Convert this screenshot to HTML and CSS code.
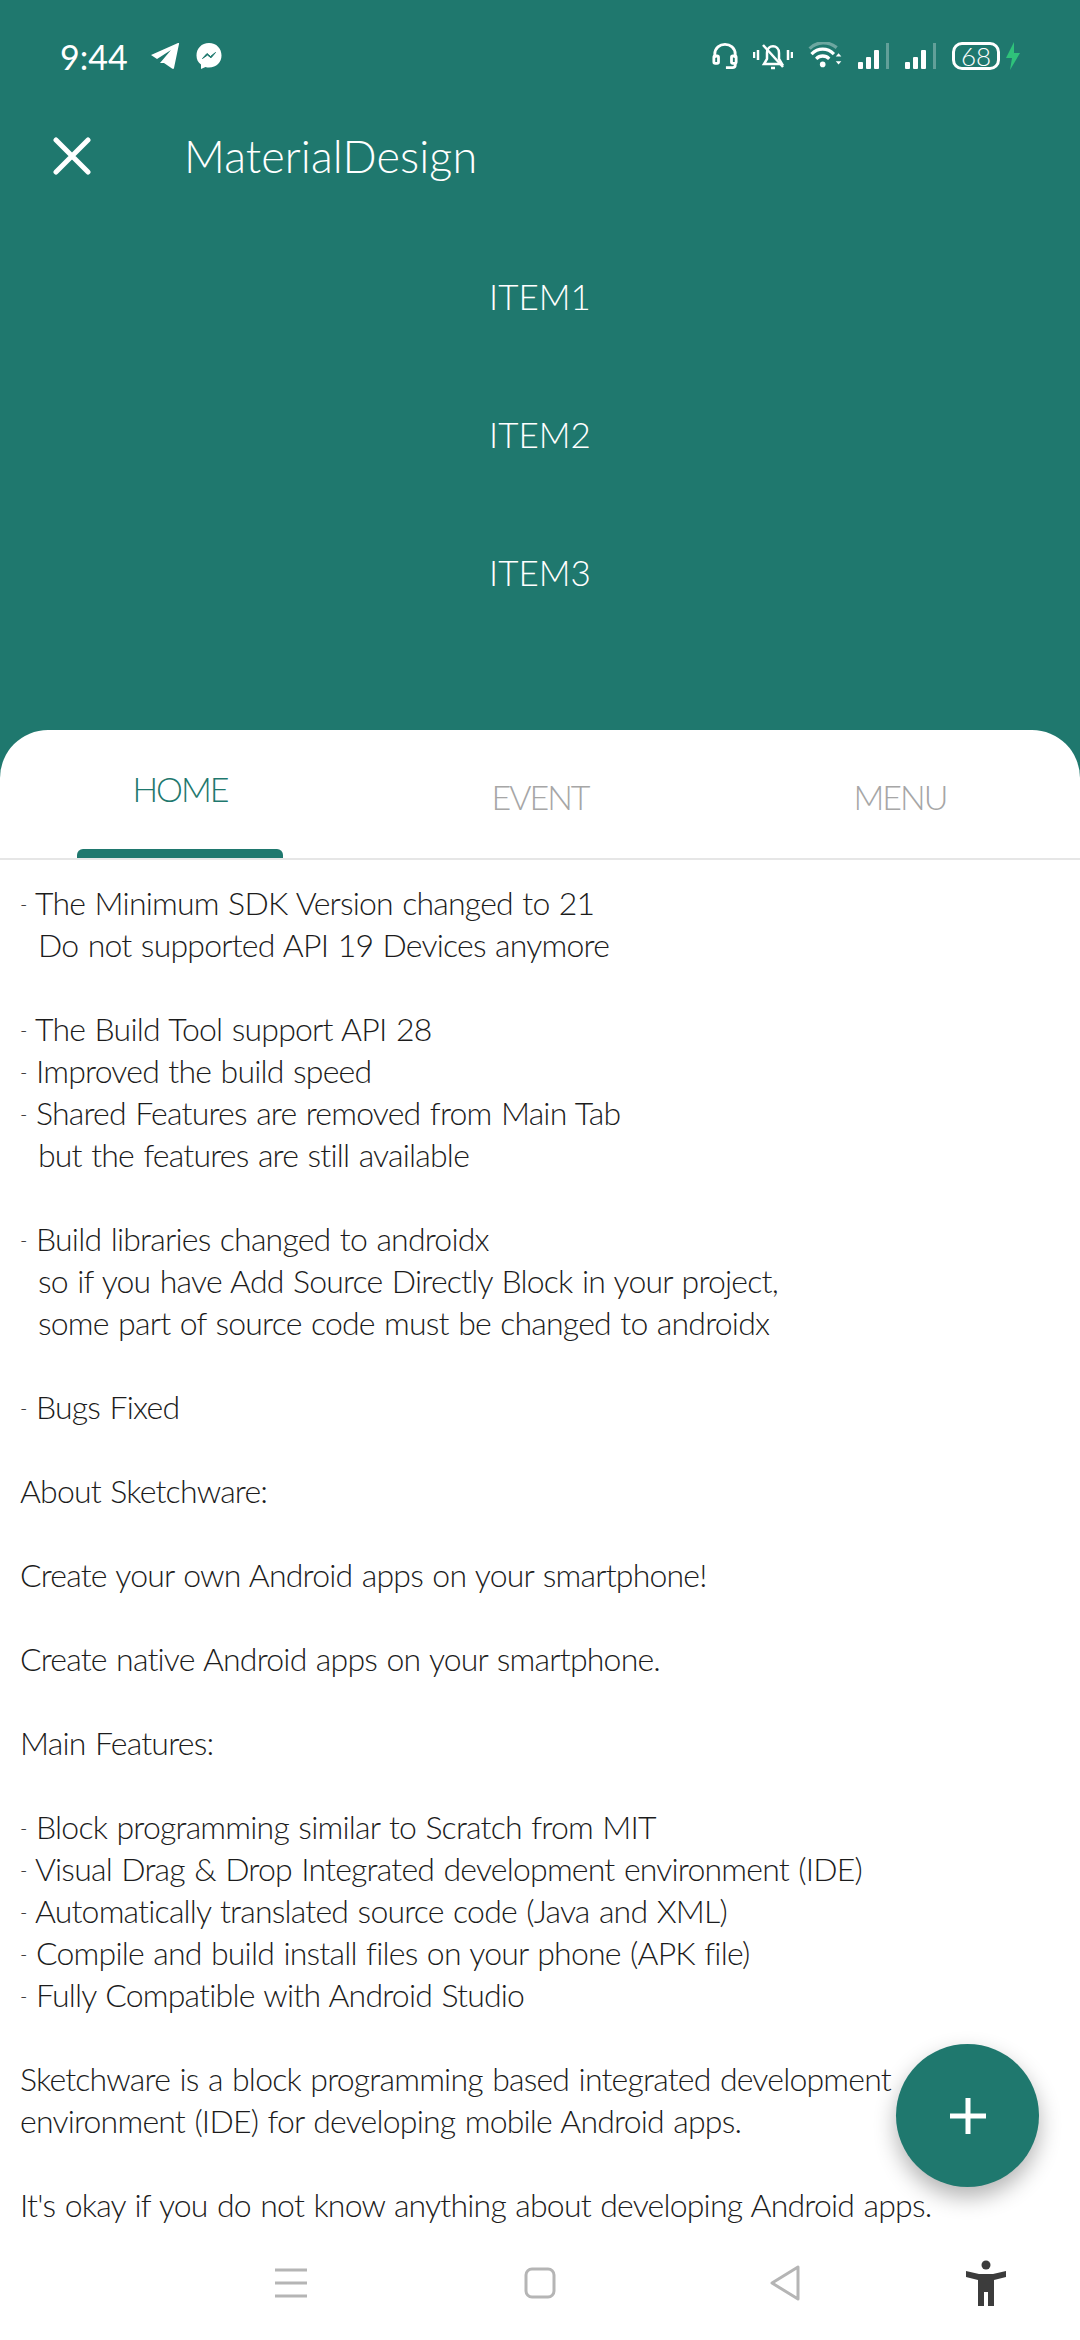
FILE: index.html
```html
<!DOCTYPE html>
<html>
    <head>
        <meta charset="utf-8">
        <title>MaterialDesign</title>
        <link rel="stylesheet" href="styles.css">
    </head>
    <body>
        <div class="screen">
            <div class="top">
                <div class="status">
                    <div class="status-left">
                        <span class="time">9:44</span>
                        <svg class="ic-telegram" width="30" height="28" viewBox="0 0 30 28"><path d="M1 13 L28 1 Q29.500 .5 29 2 L24 26 Q23.500 27.500 22 26.500 L14 21 L10 21 L21 8 L7 17 Z" fill="#fff"/></svg>
                        <svg class="ic-messenger" width="28" height="28" viewBox="0 0 28 28"><path d="M14 1 C6.500 1 1.500 6.500 1.500 13.500 C1.500 17.500 3 20.500 6 22.500 L6 27 L10.500 25 C11.500 25.500 12.800 25.600 14 25.600 C21.500 25.600 26.500 20 26.500 13.500 C26.500 6.500 21.500 1 14 1 Z" fill="#fff"/><path d="M7.500 16.500 L12 11.500 L15.500 14.500 L20.500 10.500 L16 15.800 L12.500 13 Z" fill="#1f786e" stroke="#1f786e"/></svg>
                    </div>
                    <div class="status-right">
                        <svg width="26" height="28" viewBox="0 0 28 30" fill="none" stroke="#fff" stroke-width="3"><path d="M3 17 V13 C3 -1 25 -1 25 13 V17"/><rect x="2" y="15" width="5" height="8" rx="1.500"/><rect x="21" y="15" width="5" height="8" rx="1.500"/><path d="M25 23 V25 Q25 27.500 22 27.500 H15"/></svg>
                        <svg width="40" height="30" viewBox="0 0 40 30" fill="none" stroke="#fff" stroke-width="2.500"><path d="M1 11 V17 M5 9 V19 M35 9 V19 M39 11 V17"/><path d="M11 23 H29 L26 18 V12 C26 3 14 3 14 12 V18 Z"/><path d="M10 4 L30 26"/><path d="M18 27 H22"/></svg>
                        <svg class="ic-wifi" width="35" height="28" viewBox="0 0 36 30" fill="none" stroke-width="3.500"><path d="M1 7 C9 -1 21 -1 30 6" stroke="#fff" stroke-opacity=".35"/><path d="M3 13 C10 6 20 6 27 13" stroke="#fff"/><path d="M8 18 C12 14 18 14 22 18" stroke="#fff"/><circle cx="15" cy="24" r="3" fill="#fff"/><path d="M32 12 L29 15.500 H35 Z M32 24 L29 20.500 H35 Z" fill="#fff" stroke="none"/></svg>
                        <svg class="ic-signal" width="32" height="28" viewBox="0 0 32 28"><rect x="0" y="20" width="5" height="7" rx="1" fill="#fff"/><rect x="8" y="15" width="5" height="12" rx="1" fill="#fff"/><rect x="16" y="8" width="5" height="19" rx="1" fill="#fff"/><rect x="28" y="1" width="3" height="26" fill="#fff" fill-opacity=".3"/></svg>
                        <svg class="ic-signal" width="32" height="28" viewBox="0 0 32 28"><rect x="0" y="20" width="5" height="7" rx="1" fill="#fff"/><rect x="8" y="15" width="5" height="12" rx="1" fill="#fff"/><rect x="16" y="8" width="5" height="19" rx="1" fill="#fff"/><rect x="28" y="1" width="3" height="26" fill="#fff" fill-opacity=".3"/></svg>
                        <div class="battery">68</div>
                        <svg class="ic-bolt" width="16" height="28" viewBox="0 0 16 28"><path d="M9 0 L1 16 H7 L5 28 L15 11 H9 Z" fill="#2fc27a"/></svg>
                    </div>
                </div>
                <div class="toolbar">
                    <svg class="ic-close" width="38" height="38" viewBox="0 0 38 38"><path d="M3 3 L35 35 M35 3 L3 35" stroke="#fff" stroke-width="5" stroke-linecap="round"/></svg>
                    <span class="title">MaterialDesign</span>
                </div>
                <div class="items">
                    <div class="item">ITEM1</div>
                    <div class="item">ITEM2</div>
                    <div class="item">ITEM3</div>
                </div>
            </div>
            <div class="sheet">
                <div class="tabs">
                    <div class="tab active">HOME</div>
                    <div class="tab">EVENT</div>
                    <div class="tab">MENU</div>
                </div>
                <div class="content">
                    <p><span class="dash">-</span> The Minimum SDK Version changed to 21<br>
                    <span class="indent">Do not supported API 19 Devices anymore</span></p>
                    <p><span class="dash">-</span> The Build Tool support API 28<br>
                    <span class="dash">-</span> Improved the build speed<br>
                    <span class="dash">-</span> Shared Features are removed from Main Tab<br>
                    <span class="indent">but the features are still available</span></p>
                    <p><span class="dash">-</span> Build libraries changed to androidx<br>
                    <span class="indent">so if you have Add Source Directly Block in your project,</span><br>
                    <span class="indent">some part of source code must be changed to androidx</span></p>
                    <p><span class="dash">-</span> Bugs Fixed</p>
                    <p>About Sketchware:</p>
                    <p>Create your own Android apps on your smartphone!</p>
                    <p>Create native Android apps on your smartphone.</p>
                    <p>Main Features:</p>
                    <p><span class="dash">-</span> Block programming similar to Scratch from MIT<br>
                    <span class="dash">-</span> Visual Drag &amp; Drop Integrated development environment (IDE)<br>
                    <span class="dash">-</span> Automatically translated source code (Java and XML)<br>
                    <span class="dash">-</span> Compile and build install files on your phone (APK file)<br>
                    <span class="dash">-</span> Fully Compatible with Android Studio</p>
                    <p>Sketchware is a block programming based integrated development<br>
                    environment (IDE) for developing mobile Android apps.</p>
                    <p>It's okay if you do not know anything about developing Android apps.</p>
                </div>
                <div class="navbar">
                    <svg width="32" height="30" viewBox="0 0 32 30"><path d="M0 2 H32 M0 15 H32 M0 28 H32" stroke="#b5b5b5" stroke-width="3"/></svg>
                    <svg width="32" height="32" viewBox="0 0 32 32"><rect x="2" y="2" width="28" height="28" rx="6" fill="none" stroke="#b5b5b5" stroke-width="3"/></svg>
                    <svg width="32" height="36" viewBox="0 0 32 36"><path d="M29 2 V34 L3 18 Z" fill="none" stroke="#b5b5b5" stroke-width="3" stroke-linejoin="round"/></svg>
                    <svg width="42" height="46" viewBox="0 0 42 46"><circle cx="21" cy="5" r="4.500" fill="#3c3c3c"/><path d="M1 11 L14 14 H28 L41 11 L41 17 L29 20 V46 H23 V32 H19 V46 H13 V20 L1 17 Z" fill="#3c3c3c"/></svg>
                </div>
            </div>
            <div class="fab">
                <svg width="38" height="38" viewBox="0 0 38 38"><path d="M19 1 V37 M1 19 H37" stroke="#fff" stroke-width="5"/></svg>
            </div>
        </div>
    </body>
</html>
```

FILE: styles.css
```css
html,body{
    margin: 0;
    padding: 0;
}
body{
    font-family: "Lato", "Liberation Sans", sans-serif;
    font-weight: 300;
}
.screen{
    position: relative;
    width: 1080px;
    height: 2340px;
    overflow: hidden;
    background-color: #1f786e;
    display: flex;
    flex-direction: column;
}
.top{
    flex: none;
    height: 730px;
    color: #fff;
}
.status{
    height: 112px;
    display: flex;
    justify-content: space-between;
    align-items: center;
    padding: 0 59px 0 60px;
}
.status-left{
    display: flex;
    align-items: center;
}
.time{
    font-size: 34px;
    font-weight: 400;
    margin-right: 22px;
}
.ic-telegram{
    margin-right: 15px;
}
.status-right{
    display: flex;
    align-items: center;
    gap: 15px;
}
.battery{
    width: 42px;
    height: 22px;
    border: 3px solid #fff;
    border-radius: 10px;
    font-size: 26px;
    line-height: 22px;
    text-align: center;
}
.ic-bolt{
    margin-left: -10px;
}
.toolbar{
    height: 88px;
    display: flex;
    align-items: center;
    padding-left: 53px;
}
.title{
    font-size: 45px;
    letter-spacing: .1px;
    margin-left: 93px;
}
.items{
    padding-top: 27px;
    display: flex;
    flex-direction: column;
    align-items: center;
}
.item{
    height: 138px;
    line-height: 138px;
    font-size: 35px;
}
.sheet{
    flex: 1;
    min-height: 0;
    display: flex;
    flex-direction: column;
    background-color: #fff;
    border-radius: 48px 48px 0 0;
    overflow: hidden;
}
.tabs{
    flex: none;
    height: 128px;
    display: flex;
    border-bottom: 2px solid #e6e6e6;
}
.tab{
    width: 360px;
    padding-top: 46px;
    text-align: center;
    font-size: 34px;
    letter-spacing: -2px;
    color: #a6a6a6;
}
.tab.active{
    position: relative;
    padding-top: 38px;
    color: #1f786e;
}
.tab.active::after{
    content: "";
    position: absolute;
    left: 77px;
    bottom: 0;
    width: 206px;
    height: 9px;
    background-color: #1f786e;
    border-radius: 6px 6px 0 0;
}
.content{
    flex: 1;
    min-height: 0;
    overflow: hidden;
    padding: 22px 0 0 20px;
    font-size: 32px;
    line-height: 42px;
    letter-spacing: -.8px;
    word-spacing: 1.500px;
    white-space: nowrap;
    color: #1c1c1c;
}
.content p{
    margin: 0 0 42px;
}
.dash{
    font-size: 20px;
    line-height: 1;
    vertical-align: 4px;
}
.indent{
    margin-left: 18px;
}
.navbar{
    flex: none;
    height: 86px;
    padding-bottom: 14px;
    display: flex;
    align-items: center;
    padding-left: 275px;
    background-color: #fff;
}
.navbar svg:nth-child(2){
    margin-left: 217px;
}
.navbar svg:nth-child(3){
    margin-left: 213px;
}
.navbar svg:nth-child(4){
    margin-left: 164px;
}
.fab{
    position: absolute;
    left: 896px;
    top: 2044px;
    width: 143px;
    height: 143px;
    border-radius: 50%;
    background-color: #1f786e;
    box-shadow: 0 10px 22px rgba(0,0,0,.3);
    display: flex;
    align-items: center;
    justify-content: center;
}
```
